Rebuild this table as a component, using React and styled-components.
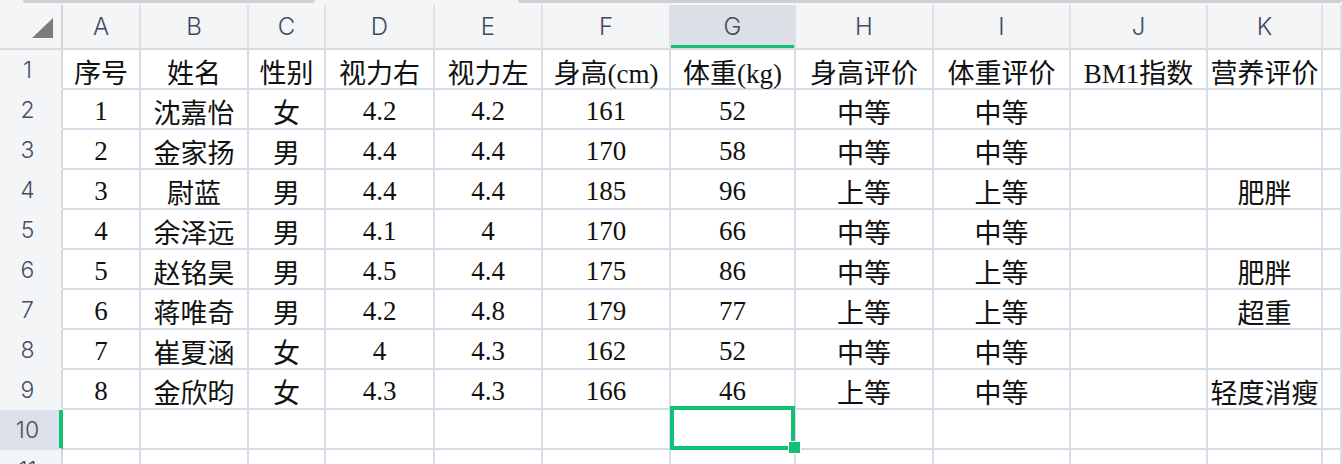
import React from 'react';
import styled, { createGlobalStyle, css } from 'styled-components';

const GREEN = '#12bf75';
const GRID = '#d6dce8';
const HEAD_BG = '#f4f5f7';

const Global = createGlobalStyle`
  html, body { margin: 0; padding: 0; background: #fff; overflow: hidden; }
  #root { width: 1342px; height: 464px; overflow: hidden; }
`;

const COLS = [
  { key: 'A', w: 78 },
  { key: 'B', w: 108 },
  { key: 'C', w: 77 },
  { key: 'D', w: 109 },
  { key: 'E', w: 108 },
  { key: 'F', w: 128 },
  { key: 'G', w: 125 },
  { key: 'H', w: 138 },
  { key: 'I', w: 137 },
  { key: 'J', w: 137 },
  { key: 'K', w: 115 },
  { key: '', w: 19 },
];

const DATA = [
  ['序号', '姓名', '性别', '视力右', '视力左', '身高(cm)', '体重(kg)', '身高评价', '体重评价', 'BM1指数', '营养评价', ''],
  ['1', '沈嘉怡', '女', '4.2', '4.2', '161', '52', '中等', '中等', '', '', ''],
  ['2', '金家扬', '男', '4.4', '4.4', '170', '58', '中等', '中等', '', '', ''],
  ['3', '尉蓝', '男', '4.4', '4.4', '185', '96', '上等', '上等', '', '肥胖', ''],
  ['4', '余泽远', '男', '4.1', '4', '170', '66', '中等', '中等', '', '', ''],
  ['5', '赵铭昊', '男', '4.5', '4.4', '175', '86', '中等', '上等', '', '肥胖', ''],
  ['6', '蒋唯奇', '男', '4.2', '4.8', '179', '77', '上等', '上等', '', '超重', ''],
  ['7', '崔夏涵', '女', '4', '4.3', '162', '52', '中等', '中等', '', '', ''],
  ['8', '金欣昀', '女', '4.3', '4.3', '166', '46', '上等', '中等', '', '轻度消瘦', ''],
  ['', '', '', '', '', '', '', '', '', '', '', ''],
];

const ACTIVE_COL = 6; // G
const ACTIVE_ROW = 10;

const Sheet = styled.div`
  width: 1342px;
  height: 464px;
  overflow: hidden;
  background: #fff;
`;

const TopStrip = styled.div`
  display: flex;
  height: 5px;
  background: ${HEAD_BG};
`;

const TabEdge = styled.div`
  height: 3px;
  background: #cfd0d3;
  border-radius: 0 0 4px 4px;
  ${(p) => (p.$grow ? css`flex: 1;` : css`width: ${p.$w}px;`)}
  margin-left: ${(p) => p.$ml}px;
`;

const Grid = styled.div`
  display: grid;
  grid-template-columns: 63px ${COLS.map((c) => c.w + 'px').join(' ')};
  grid-template-rows: 45px;
  grid-auto-rows: 40px;
`;

const Corner = styled.div`
  box-sizing: border-box;
  background: ${HEAD_BG};
  border-right: 2px solid #d5d7db;
  border-bottom: 2px solid #d9dadd;
  display: flex;
  align-items: flex-end;
  justify-content: flex-end;
  padding: 0 8px 10px 0;
`;

const Triangle = styled.div`
  width: 0;
  height: 0;
  border-left: 21px solid transparent;
  border-bottom: 20px solid #7b7c7e;
`;

const ColHead = styled.div`
  box-sizing: border-box;
  background: ${(p) => (p.$active ? '#dcdfe6' : HEAD_BG)};
  border-right: 2px solid #dfe0e3;
  border-bottom: 2px solid #d9dadd;
  box-shadow: ${(p) => (p.$active ? `inset 0 -3px 0 ${GREEN}` : 'none')};
  display: flex;
  align-items: center;
  justify-content: center;
  font-family: Inter, "Liberation Sans", sans-serif;
  font-size: 24px;
  font-weight: 300;
  color: #3f4a5d;
  padding-bottom: 1px;
`;

const RowHead = styled.div`
  box-sizing: border-box;
  background: ${(p) => (p.$active ? '#dce0e8' : HEAD_BG)};
  border-right: 2px solid ${(p) => (p.$active ? GREEN : '#d5d7db')};
  border-bottom: 2px solid ${(p) => (p.$active ? '#dce0e8' : HEAD_BG)};
  box-shadow: ${(p) => (p.$active ? `inset -2px 0 0 ${GREEN}` : 'none')};
  display: flex;
  align-items: center;
  justify-content: center;
  padding: 2px 6px 0 0;
  font-family: Inter, "Liberation Sans", sans-serif;
  font-size: 23px;
  font-weight: 300;
  color: #455064;
`;

const Cell = styled.div`
  box-sizing: border-box;
  position: relative;
  background: #fff;
  border-right: 2px solid ${GRID};
  border-bottom: 2px solid ${GRID};
  display: flex;
  align-items: center;
  justify-content: center;
  padding-top: 5px;
  white-space: nowrap;
  font-family: "Liberation Serif", "Noto Sans CJK SC", serif;
  font-size: 27px;
  color: #111;
  ${(p) =>
    p.$selected &&
    css`
      z-index: 2;
      &::before {
        content: '';
        position: absolute;
        top: -4px;
        left: -1px;
        right: -1px;
        bottom: -2px;
        border: 4px solid ${GREEN};
        pointer-events: none;
      }
      &::after {
        content: '';
        position: absolute;
        width: 11px;
        height: 11px;
        right: -7px;
        bottom: -6px;
        background: ${GREEN};
        border: 1px solid #fff;
      }
    `}
`;

export default function App() {
  return (
    <>
      <Global />
      <Sheet>
        <TopStrip>
          <TabEdge $ml={23} $w={292} />
          <TabEdge $ml={203} $grow />
        </TopStrip>
        <Grid>
          <Corner>
            <Triangle />
          </Corner>
          {COLS.map((c, i) => (
            <ColHead key={i} $active={i === ACTIVE_COL}>
              {c.key}
            </ColHead>
          ))}
          {DATA.map((row, r) => (
            <React.Fragment key={r}>
              <RowHead $active={r + 1 === ACTIVE_ROW}>{r + 1}</RowHead>
              {row.map((v, c) => (
                <Cell key={c} $selected={r + 1 === ACTIVE_ROW && c === ACTIVE_COL}>
                  {v}
                </Cell>
              ))}
            </React.Fragment>
          ))}
          <RowHead>11</RowHead>
          {COLS.map((c, i) => (
            <Cell key={'x' + i} />
          ))}
        </Grid>
      </Sheet>
    </>
  );
}
